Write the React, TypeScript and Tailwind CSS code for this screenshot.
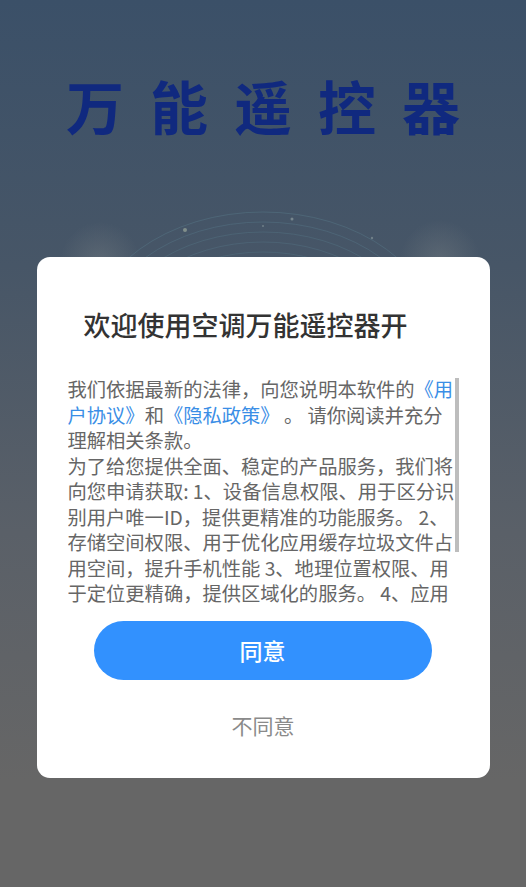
const cjk = '"Noto Sans CJK SC", "Noto Sans", sans-serif';

function Arcs() {
  return (
    <svg
      className="absolute left-0 top-[190px]"
      width="526"
      height="90"
      viewBox="0 0 526 90"
      fill="none"
    >
      <defs>
        <radialGradient id="glow" cx="50%" cy="50%" r="50%">
          <stop offset="0%" stopColor="#8a8f8f" stopOpacity="0.3" />
          <stop offset="100%" stopColor="#8a8f8f" stopOpacity="0" />
        </radialGradient>
      </defs>
      <circle cx="100" cy="72" r="40" fill="url(#glow)" />
      <circle cx="440" cy="70" r="40" fill="url(#glow)" />
      {[0, 1, 2, 3, 4, 5, 6, 7, 8].map((i) => (
        <ellipse
          key={i}
          cx="263"
          cy={150 + i * 3}
          rx={175 - i * 9}
          ry={128 - i * 7}
          stroke="#557585"
          strokeOpacity={0.5 - i * 0.03}
          strokeWidth="1"
        />
      ))}
      <circle cx="185" cy="40" r="2" fill="#9aa79a" fillOpacity="0.7" />
      <circle cx="292" cy="29" r="1.5" fill="#9aa7a9" fillOpacity="0.6" />
      <circle cx="372" cy="48" r="1.2" fill="#9aa7a9" fillOpacity="0.5" />
      <circle cx="263" cy="36" r="1" fill="#9aa7a9" fillOpacity="0.5" />
    </svg>
  );
}

export default function App() {
  return (
    <div
      lang="zh-CN"
      className="relative h-[887px] w-full overflow-hidden bg-[linear-gradient(180deg,#3b5068_0%,#475667_30%,#5a6068_60%,#666666_88%)]"
      style={{ fontFamily: cjk }}
    >
      <h1 className="pt-[70px] pl-[26px] text-center text-[58px] font-bold leading-[70px] tracking-[26px] text-[#10297f]">
        万能遥控器
      </h1>
      <Arcs />

      <div className="absolute inset-0 flex justify-center pt-[257px]">
        <div className="h-[521px] w-[453px] rounded-[13px] bg-white">
          <h2 className="pt-[49px] pl-[47px] text-[27px] font-medium leading-[38px] text-[#333333]">
            欢迎使用空调万能遥控器开
          </h2>

          <div className="relative mt-[33px] ml-[31px] h-[229px] w-[392px] overflow-hidden">
            <p className="text-[19.3px] leading-[25.5px] text-[#666666]">
              我们依据最新的法律，向您说明本软件的
              <span className="text-[#3a8ee6]">《用户协议》</span>和
              <span className="text-[#3a8ee6]">《隐私政策》</span> 。
              请你阅读并充分理解相关条款。
              <br />
              为了给您提供全面、稳定的产品服务，我们将向您申请获取: 1、设备信息权限、用于区分识别用户唯一ID，提供更精准的功能服务。
              2、存储空间权限、用于优化应用缓存垃圾文件占用空间，提升手机性能
              3、地理位置权限、用于定位更精确，提供区域化的服务。
              4、应用列表权限、用于识别已安装的应用，提供更好的使用体验。
            </p>
            <div className="absolute right-[1px] top-[1px] h-[174px] w-[4px] bg-[#bdbdbd]" />
          </div>

          <button className="mx-[57px] mt-[15px] flex h-[59px] w-[338px] items-center justify-center rounded-full bg-[#3291fe] text-[23px] font-medium text-white">
            同意
          </button>
          <button className="mt-[30px] block w-full text-center text-[21px] leading-[30px] text-[#8a8a8a]">
            不同意
          </button>
        </div>
      </div>
    </div>
  );
}
